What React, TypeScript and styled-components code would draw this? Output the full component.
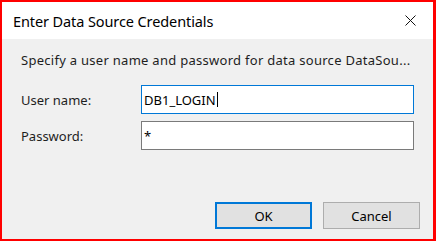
import React from "react";
import styled, { createGlobalStyle } from "styled-components";

const GlobalStyle = createGlobalStyle`
  html, body {
    margin: 0;
    padding: 0;
    background: #ffffff;
  }
  body {
    font-family: "Noto Sans", "Open Sans", "Liberation Sans", sans-serif;
  }
`;

function App() {
  return (
    <Window>
      <GlobalStyle />
      <TitleBar>
        <Title>Enter Data Source Credentials</Title>
        <CloseButton>
          <svg width="11" height="11" viewBox="0 0 11 11">
            <path d="M0.5 0.5 L10.5 10.5 M10.5 0.5 L0.5 10.5" stroke="#111" strokeWidth="1" />
          </svg>
        </CloseButton>
      </TitleBar>
      <Body>
        <Description>
          Specify a user name and password for data source DataSou...
        </Description>
        <Form>
          <Label>User name:</Label>
          <Field focused>
            DB1_LOGIN
            <Caret />
          </Field>
          <Label>Password:</Label>
          <Field>*</Field>
        </Form>
        <Buttons>
          <Button primary>OK</Button>
          <Button>Cancel</Button>
        </Buttons>
      </Body>
    </Window>
  );
}

export default App;

const Window = styled.div`
  width: 436px;
  height: 241px;
  box-sizing: border-box;
  border: 2px solid #ff0000;
  border-right-width: 3px;
  display: flex;
  flex-direction: column;
  background: #f0f0f0;
`;

const TitleBar = styled.div`
  height: 37px;
  background: #ffffff;
  display: flex;
  align-items: center;
  justify-content: space-between;
  padding: 0 17px 0 11px;
`;

const Title = styled.div`
  font-size: 14.5px;
  color: #000000;
  letter-spacing: -0.1px;
`;

const CloseButton = styled.div`
  width: 11px;
  height: 11px;
  display: flex;
`;

const Body = styled.div`
  flex: 1;
  display: flex;
  flex-direction: column;
  padding: 12px 13px 10px 19px;
`;

const Description = styled.div`
  font-size: 13px;
  line-height: 18px;
  color: #1e1e1e;
  white-space: nowrap;
  letter-spacing: 0.28px;
`;

const Form = styled.div`
  display: grid;
  grid-template-columns: 120px 273px;
  row-gap: 7px;
  align-items: center;
  margin-top: 16px;
`;

const Label = styled.div`
  font-size: 13px;
  color: #1e1e1e;
`;

const Field = styled.div<{ focused?: boolean }>`
  height: 29px;
  box-sizing: border-box;
  background: #ffffff;
  border: 1px solid ${({ focused }) => (focused ? "#0078d7" : "#7a7a7a")};
  display: flex;
  align-items: center;
  padding-left: 2px;
  font-size: 13px;
  color: #000000;
`;

const Caret = styled.span`
  display: inline-block;
  width: 1px;
  height: 15px;
  background: #000000;
  margin-left: 1px;
`;

const Buttons = styled.div`
  margin-top: auto;
  display: flex;
  justify-content: flex-end;
  gap: 11px;
`;

const Button = styled.div<{ primary?: boolean }>`
  width: 97px;
  height: 27px;
  box-sizing: border-box;
  background: #e1e1e1;
  border: ${({ primary }) => (primary ? "2px solid #0078d7" : "1px solid #adadad")};
  display: flex;
  align-items: center;
  justify-content: center;
  font-size: 13px;
  color: #000000;
`;
